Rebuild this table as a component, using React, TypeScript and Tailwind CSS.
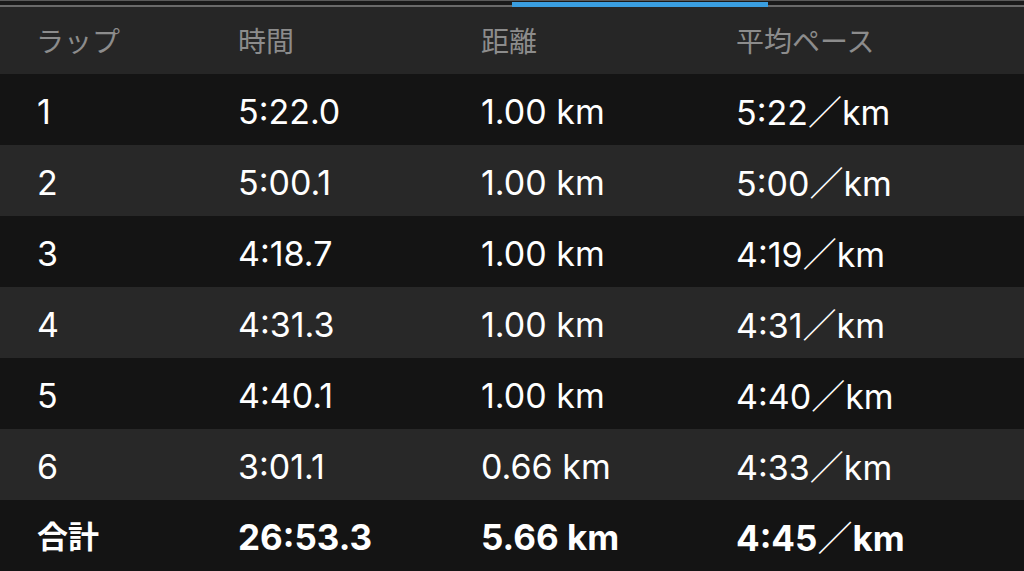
const laps = [
  { lap: "1", time: "5:22.0", dist: "1.00 km", pace: "5:22" },
  { lap: "2", time: "5:00.1", dist: "1.00 km", pace: "5:00" },
  { lap: "3", time: "4:18.7", dist: "1.00 km", pace: "4:19" },
  { lap: "4", time: "4:31.3", dist: "1.00 km", pace: "4:31" },
  { lap: "5", time: "4:40.1", dist: "1.00 km", pace: "4:40" },
  { lap: "6", time: "3:01.1", dist: "0.66 km", pace: "4:33" },
];

const font = "font-['Inter','Noto_Sans_CJK_JP',sans-serif]";

function Row({
  cells,
  bg,
  bold,
}: {
  cells: [string, string, string, string];
  bg: string;
  bold?: boolean;
}) {
  return (
    <div
      className={`flex h-[71px] items-center pt-[3px] text-white ${bg} ${
        bold ? "text-[35px] font-bold" : "text-[34px] font-normal"
      }`}
    >
      <div className={`w-[238px] pl-[37px] ${bold ? "text-[31px]" : ""}`}>{cells[0]}</div>
      <div className="w-[243px]">{cells[1]}</div>
      <div className="w-[255px]">{cells[2]}</div>
      <div className="flex-1">
        {cells[3]}
        <span className="font-['Noto_Sans_CJK_JP',sans-serif] font-normal">／</span>km
      </div>
    </div>
  );
}

export default function App() {
  return (
    <div className={`h-[571px] w-[1024px] overflow-hidden bg-[#141414] ${font}`}>
      <div className="relative h-[7px] bg-[#1a1a1a]">
        <div className="h-px bg-[#5a5a5a]" />
        <div className="mt-[4px] h-[2px] bg-[#6a6a6a]" />
        <div className="absolute left-[512px] top-[2px] h-[5px] w-[256px] bg-[#3a9ee0]" />
      </div>
      <div className="flex h-[67px] items-center bg-[#262626] pt-[3px] text-[28px] text-[#8c8c8c]">
        <div className="w-[238px] pl-[36px]">ラップ</div>
        <div className="w-[243px]">時間</div>
        <div className="w-[255px]">距離</div>
        <div className="flex-1">平均ペース</div>
      </div>
      {laps.map((l, i) => (
        <Row
          key={l.lap}
          cells={[l.lap, l.time, l.dist, l.pace]}
          bg={i % 2 === 0 ? "bg-[#141414]" : "bg-[#282828]"}
        />
      ))}
      <Row cells={["合計", "26:53.3", "5.66 km", "4:45"]} bg="bg-[#141414]" bold />
    </div>
  );
}
